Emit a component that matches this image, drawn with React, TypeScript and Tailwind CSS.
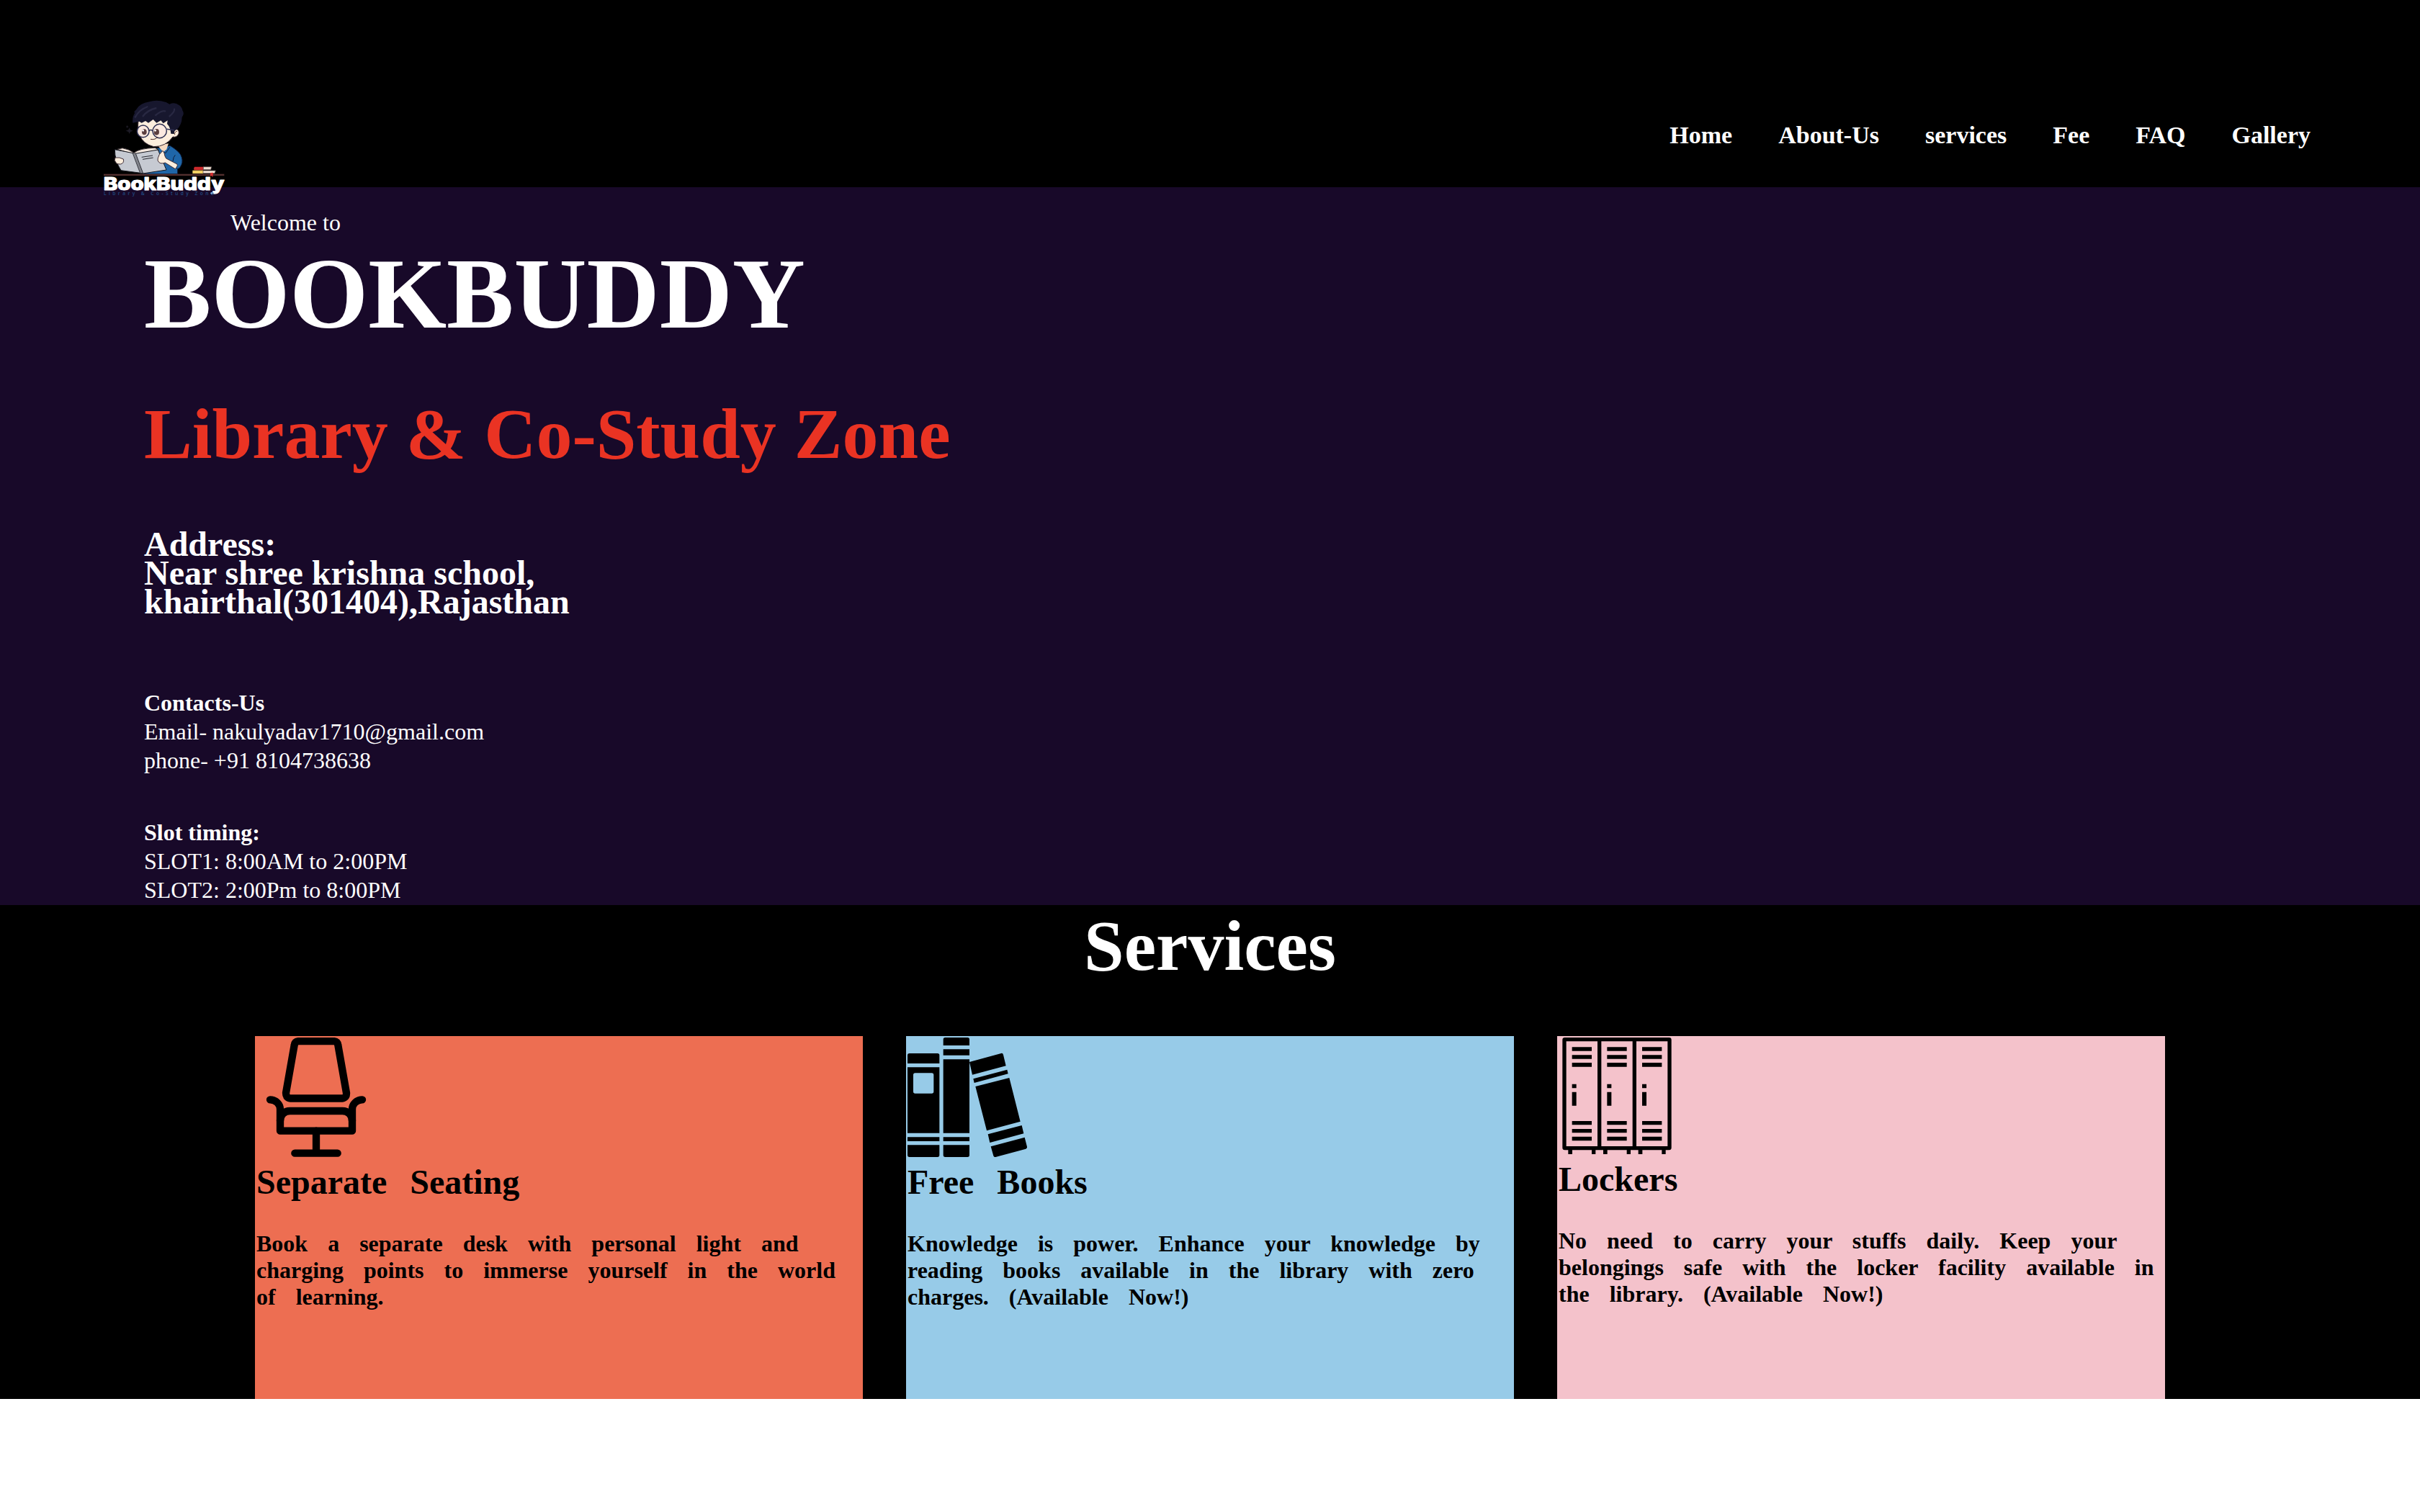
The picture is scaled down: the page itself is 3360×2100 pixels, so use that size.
import type { ReactNode } from "react";

const navItems = ["Home", "About-Us", "services", "Fee", "FAQ", "Gallery"];

function Logo() {
  return (
    <svg className="block h-[150px] w-[200px] shrink-0" viewBox="0 0 600 450">
      {/* sparkle */}
      <path d="M149 142 L153 151 L164 155 L153 159 L149 168 L145 159 L134 155 L145 151Z M140 132l2 4 4 2-4 2-2 4-2-4-4-2 4-2z" fill="#1d1b26" />
      {/* shirt */}
      <path d="M262 228 L290 224 L318 217 Q350 236 362 254 Q374 278 366 296 Q360 312 350 314 L350 335 L204 335 L262 300Z" fill="#1f66a8" stroke="#0d1c38" strokeWidth="3" />
      <path d="M350 314 L326 296 M330 282 Q332 262 340 256 M283 240 L300 248 L318 222" fill="none" stroke="#0d1c38" strokeWidth="3" />
      <path d="M266 215 L312 208 L304 232 L290 244Z" fill="#f6d9c0" />
      {/* head */}
      <path d="M186 114 Q182 150 192 174 Q206 210 250 221 Q300 222 330 180 Q346 184 354 168 Q358 150 342 148 L334 100 L230 96Z" fill="#fdeedd" stroke="#3b2a35" strokeWidth="3" />
      <path d="M338 172 Q336 158 348 157" fill="none" stroke="#6b4439" strokeWidth="3" />
      {/* hair */}
      <path d="M163 122 Q160 96 172 80 Q164 78 176 68 Q192 40 232 34 Q262 24 302 36 L316 44 Q338 34 356 48 Q368 56 370 70 Q380 84 368 98 Q368 130 346 150 Q334 154 336 168 L322 167 Q320 140 306 126 L308 112 L290 124 L280 112 L262 122 L248 108 L228 122 L216 114 L200 122 L190 116Z" fill="#17172e" />
      <path d="M172 100 Q190 66 226 54 M204 96 Q224 68 262 60 M256 92 Q286 66 300 74 M314 96 Q340 76 336 62" fill="none" stroke="#282842" strokeWidth="7" />
      {/* glasses */}
      <circle cx="206" cy="157" r="25" fill="#fbe9e0" />
      <circle cx="275" cy="156" r="29" fill="#fbe9e0" />
      <ellipse cx="211" cy="160" rx="10" ry="12" fill="#5d4040" />
      <ellipse cx="262" cy="160" rx="11" ry="13" fill="#5d4040" />
      <circle cx="206" cy="154" r="4" fill="#fff" />
      <circle cx="257" cy="154" r="4" fill="#fff" />
      <g fill="none" stroke="#2e3052" strokeWidth="4.500">
        <circle cx="206" cy="157" r="25" />
        <circle cx="275" cy="156" r="29" />
        <path d="M230 155 Q238 148 246 155 M304 148 L336 152" />
      </g>
      <path d="M237 190 Q258 194 266 180" fill="none" stroke="#4b2c28" strokeWidth="3" />
      {/* open book */}
      <path d="M98 232 L120 227 Q150 232 168 247 Q190 228 256 226 L272 236 L200 256 L160 250Z" fill="#f5e9df" stroke="#3a3136" strokeWidth="3" />
      <path d="M88 233 L164 248 L196 331 L114 320 Q88 280 88 233Z" fill="#c6cad2" stroke="#17181f" strokeWidth="3" />
      <path d="M174 250 L268 234 L303 318 L205 333Z" fill="#c6cad2" stroke="#17181f" strokeWidth="3" />
      <path d="M162 247 L175 249 L206 332 L194 332Z" fill="#81838b" stroke="#17181f" strokeWidth="2" />
      <path d="M200 265 L246 258 M204 274 L248 267" stroke="#25262e" strokeWidth="3" />
      {/* hands */}
      <path d="M124 273 Q108 264 90 267 Q84 278 92 286 Q96 296 112 294 Q128 290 124 273Z" fill="#fdeedd" stroke="#3b2a35" strokeWidth="3" />
      <path d="M288 238 Q270 254 268 268 Q264 280 272 286 Q280 294 298 288 L340 314 Q352 300 348 294 L302 270 Q296 262 294 248Z" fill="#fdeedd" stroke="#3b2a35" strokeWidth="3" />
      {/* shelf and stacked books */}
      <rect x="42" y="335" width="502" height="7" fill="#53302f" />
      <path d="M420 305 H457 V319 H418 Q416 310 420 305Z" fill="#cc2a2c" />
      <path d="M457 305 H491 L488 317 H457Z" fill="#eee0d2" stroke="#55484a" strokeWidth="2" />
      <path d="M412 320 H456 V333 H412Z" fill="#f0ce62" />
      <path d="M456 321 H508 L504 332 H456Z" fill="#f4e6d8" stroke="#55484a" strokeWidth="2" />
      <path d="M486 330 L498 329 L496 348 L491 342 L486 345Z" fill="#d62f31" />
      <text x="41" y="402" textLength="503" lengthAdjust="spacingAndGlyphs" className="fill-white font-['Inter',sans-serif] text-[73px] font-extrabold" stroke="#fff" strokeWidth="3" strokeLinejoin="round">BookBuddy</text>
      <text x="42" y="422" textLength="458" className="fill-[#204a80] font-['Open_Sans',sans-serif] text-[20px] font-semibold">Library &amp; Co-Study Zone</text>
      <circle cx="491" cy="415" r="4" fill="#7db7e8" />
    </svg>
  );
}

function ChairIcon() {
  return (
    <svg className="block h-[166px] w-[166px]" viewBox="48 63 498 498" fill="none" stroke="#000" strokeWidth="31" strokeLinecap="round" strokeLinejoin="round">
      <path d="M222 78.500 H372 Q386 80 388 95 L423 294 Q424 315 405 316.500 H190 Q171 315 171 294 L206 95 Q208 80 222 78.500Z" />
      <path d="M105 322 C130 322 147 342 147 362 V452 H447 V362 C447 342 464 322 489 322" />
      <path d="M147 410 C147 385 165 369 188 369 H406 C429 369 447 385 447 410" />
      <path d="M297 452 V545 M208 545 H386" />
    </svg>
  );
}

function BooksIcon() {
  return (
    <svg className="block h-[166px] w-[166px]" viewBox="60 63 498 498" fill="#000">
      <path d="M68 129 H185 Q193 129 193 137 V171 H60 V137 Q60 129 68 129Z" />
      <path fillRule="evenodd" d="M60 187 H193 V461 H60Z M92 211 Q84 211 84 219 V288 Q84 296 92 296 H161 Q169 296 169 288 V219 Q169 211 161 211Z" />
      <path d="M60 478 H193 V495 H60Z M60 511 H193 V553 Q193 561 185 561 H68 Q60 561 60 553Z" />
      <path d="M217 63 H310 Q318 63 318 71 V96 H209 V71 Q209 63 217 63Z M209 112 H318 V137 H209Z M209 154 H318 V461 H209Z M209 478 H318 V495 H209Z M209 511 H318 V553 Q318 561 310 561 H217 Q209 561 209 553Z" />
      <path d="M318 165 L450 129 Q457 127 459 135 L470 181 L330 218Z M334 235 L475 197 L479 214 L338 252Z M343 267 L484 231 L530 413 L390 451Z M395 466 L536 429 L544 463 L403 501Z M407 517 L548 479 L558 518 Q559 525 553 527 L427 561 Q420 562 418 556Z" />
    </svg>
  );
}

function LockersIcon() {
  const doors = [0, 146, 292];
  return (
    <svg className="block h-[162px] w-[162px]" viewBox="72 63 486 486" fill="#000">
      <rect x="96" y="71" width="438" height="453" rx="2" fill="none" stroke="#000" strokeWidth="16" strokeLinejoin="round" />
      <path d="M234 71 H250 V524 H234Z M380 71 H396 V524 H380Z" />
      {doors.map((dx) => (
        <path
          key={dx}
          transform={`translate(${dx} 0)`}
          d="M128 103h82v16h-82z M128 136h82v16h-82z M128 168h82v17h-82z M128 257h18v17h-18z M128 290h18v57h-18z M128 411h82v16h-82z M128 444h82v16h-82z M128 476h82v17h-82z M112 530h17v19h-17z M210 530h16v19h-16z"
        />
      ))}
    </svg>
  );
}

function ServiceCard({ color, icon, title, lines }: { color: string; icon: ReactNode; title: string; lines: string[] }) {
  return (
    <article className={`h-[504px] w-[844px] p-[2px] text-black [word-spacing:20px] ${color}`}>
      {icon}
      <h3 className="mt-[7px] text-[48px] leading-[55px] font-bold">{title}</h3>
      <p className="mt-10 text-[32px] leading-[37px] font-bold whitespace-nowrap">
        {lines.map((line) => (
          <span key={line} className="block">{line}</span>
        ))}
      </p>
    </article>
  );
}

export default function App() {
  return (
    <div className="min-h-[2100px] w-[3360px] bg-white font-['Liberation_Serif','Times_New_Roman',serif] text-white">
      <header className="flex h-[260px] items-start justify-between bg-black pt-[130px] pr-[152px] pl-[130px]">
        <Logo />
        <nav className="mt-[38px] flex gap-16 text-[34px] leading-[39px] font-bold">
          {navItems.map((item) => (
            <a key={item}>{item}</a>
          ))}
        </nav>
      </header>

      <main>
        <section className="h-[997px] bg-[#180929] pt-[29px] pl-[200px] text-[32px] leading-10">
          <p className="pl-[120px]">Welcome to</p>
          <h1 className="mt-px text-[140px] leading-[156px] font-bold">BOOKBUDDY</h1>
          <h2 className="mt-[62px] text-[100px] leading-[110px] font-bold text-[#ea3323]">Library &amp; Co-Study Zone</h2>
          <address className="mt-[78px] text-[48px] leading-10 font-bold not-italic">
            Address:
            <br />
            Near shree krishna school,
            <br />
            khairthal(301404),Rajasthan
          </address>
          <div className="mt-[100px]">
            <p className="font-bold">Contacts-Us</p>
            <p>Email- nakulyadav1710@gmail.com</p>
            <p>phone- +91 8104738638</p>
          </div>
          <div className="mt-[60px]">
            <p className="font-bold">Slot timing:</p>
            <p>SLOT1: 8:00AM to 2:00PM</p>
            <p>SLOT2: 2:00Pm to 8:00PM</p>
          </div>
        </section>

        <section className="h-[686px] bg-black pt-[2px]">
          <h2 className="text-center text-[100px] leading-[110px] font-bold">Services</h2>
          <div className="mt-[70px] flex justify-center gap-[60px]">
            <ServiceCard
              color="bg-[#ed6e52]"
              icon={<ChairIcon />}
              title="Separate Seating"
              lines={["Book a separate desk with personal light and", "charging points to immerse yourself in the world", "of learning."]}
            />
            <ServiceCard
              color="bg-[#97cbe8]"
              icon={<BooksIcon />}
              title="Free Books"
              lines={["Knowledge is power. Enhance your knowledge by", "reading books available in the library with zero", "charges. (Available Now!)"]}
            />
            <ServiceCard
              color="bg-[#f4c2cb]"
              icon={<LockersIcon />}
              title="Lockers"
              lines={["No need to carry your stuffs daily. Keep your", "belongings safe with the locker facility available in", "the library. (Available Now!)"]}
            />
          </div>
        </section>
      </main>
    </div>
  );
}
